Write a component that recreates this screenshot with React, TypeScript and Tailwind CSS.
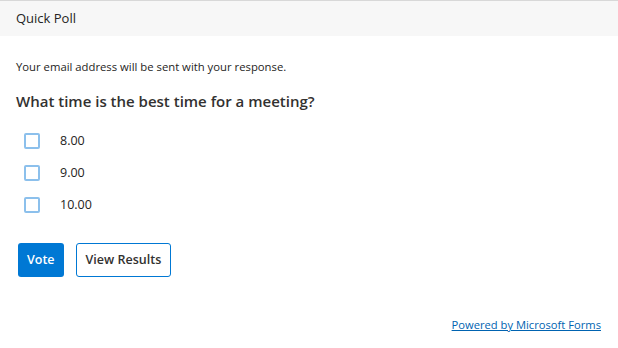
import React from "react"

const options = ["8.00", "9.00", "10.00"]

export default function App() {
  return (
    <div
      className="w-[618px] h-[348px] bg-white flex flex-col text-[#252423]"
      style={{ fontFamily: "'Segoe UI', 'Open Sans', 'Noto Sans', sans-serif" }}
    >
      {/* header */}
      <div className="h-[36px] shrink-0 bg-[#f7f7f7] border-t border-[#d8d8d8] flex items-center px-[16px] text-[13px]">
        Quick Poll
      </div>

      <div className="flex-1 flex flex-col px-[16px]">
        <p className="mt-[24px] text-[11.3px] leading-[14px] text-[#252423]">
          Your email address will be sent with your response.
        </p>
        <h2 className="mt-[17px] text-[15px] leading-[20px] font-semibold text-[#323130]">
          What time is the best time for a meeting?
        </h2>

        <div className="mt-[22px] flex flex-col gap-[16px] pl-[8px]">
          {options.map((o) => (
            <label key={o} className="flex items-center gap-[20px] h-[16px]">
              <span className="w-[16px] h-[16px] rounded-[2px] border-2 border-[#8cc0ec] bg-white" />
              <span className="text-[12.5px] text-[#252423]">{o}</span>
            </label>
          ))}
        </div>

        <div className="mt-[30px] flex items-center gap-[12px] pl-[2px]">
          <button className="h-[34px] px-[9px] rounded-[3px] bg-[#0078d4] text-white text-[12.5px] font-semibold">
            Vote
          </button>
          <button className="h-[34px] px-[9px] rounded-[3px] border border-[#0078d4] bg-white text-[#323130] text-[12.5px] font-semibold">
            View Results
          </button>
        </div>

        <div className="mt-auto mb-[14px] flex justify-end pr-[1px]">
          <a href="#" className="text-[11.2px] text-[#0063b1] underline">
            Powered by Microsoft Forms
          </a>
        </div>
      </div>
    </div>
  )
}
